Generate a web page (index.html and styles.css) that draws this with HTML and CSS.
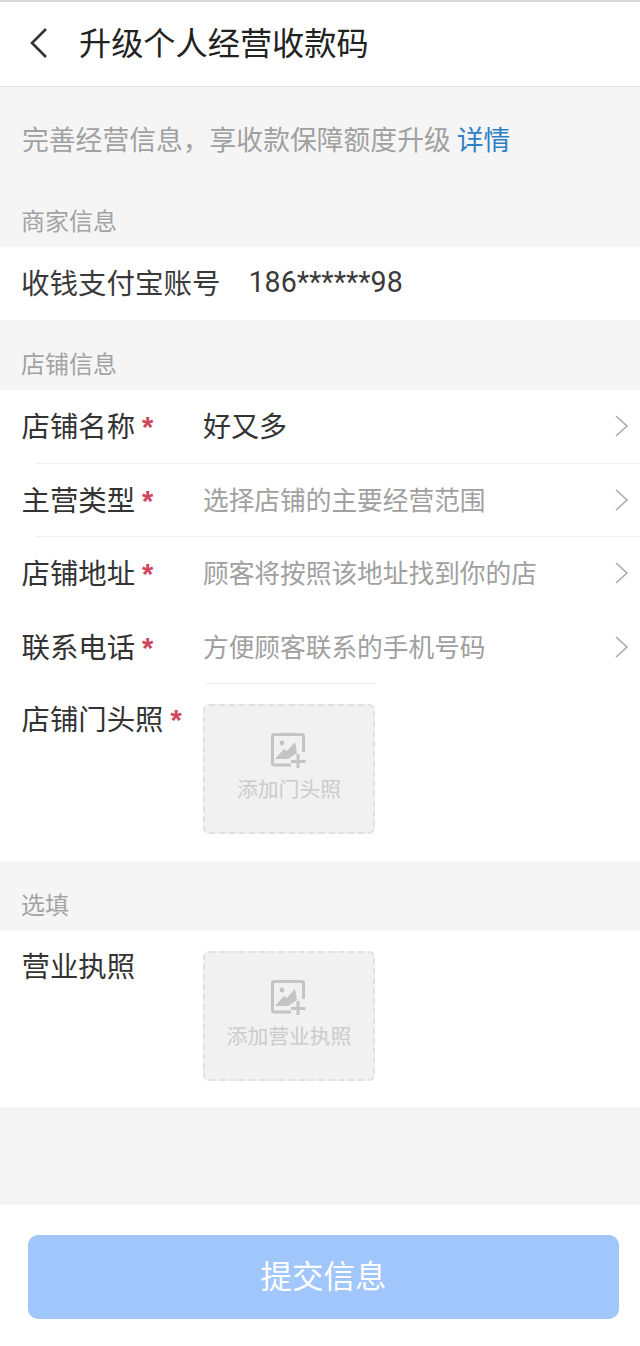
FILE: index.html
```html
<!DOCTYPE html>
<html lang="zh-CN">
    <head>
        <meta charset="UTF-8">
        <meta name="viewport" content="width=device-width, initial-scale=1.0">
        <title>升级个人经营收款码</title>
        <link rel="stylesheet" href="styles.css">
    </head>
    <body>
        <header class="topbar">
            <svg class="back" width="20" height="32" viewBox="0 0 20 32"><path d="M17 2 L3 16 L17 30" fill="none" stroke="#333" stroke-width="2.6"/></svg>
            <h1 class="title">升级个人经营收款码</h1>
        </header>

        <p class="notice">完善经营信息，享收款保障额度升级 <a class="link">详情</a></p>

        <h2 class="section first">商家信息</h2>
        <div class="group">
            <div class="account">
                <span>收钱支付宝账号</span>
                <span class="account-no">186******98</span>
            </div>
        </div>

        <h2 class="section">店铺信息</h2>
        <div class="group shop">
            <div class="row line">
                <div class="label">店铺名称<i class="star">*</i></div>
                <div class="value">好又多</div>
                <svg class="arrow" width="14" height="22" viewBox="0 0 14 22"><path d="M1 1 L12 11 L1 21" fill="none" stroke="#aaa" stroke-width="1.6"/></svg>
            </div>
            <div class="row line">
                <div class="label">主营类型<i class="star">*</i></div>
                <div class="value hint">选择店铺的主要经营范围</div>
                <svg class="arrow" width="14" height="22" viewBox="0 0 14 22"><path d="M1 1 L12 11 L1 21" fill="none" stroke="#aaa" stroke-width="1.6"/></svg>
            </div>
            <div class="row">
                <div class="label">店铺地址<i class="star">*</i></div>
                <div class="value hint">顾客将按照该地址找到你的店</div>
                <svg class="arrow" width="14" height="22" viewBox="0 0 14 22"><path d="M1 1 L12 11 L1 21" fill="none" stroke="#aaa" stroke-width="1.6"/></svg>
            </div>
            <div class="row short-line">
                <div class="label">联系电话<i class="star">*</i></div>
                <div class="value hint">方便顾客联系的手机号码</div>
                <svg class="arrow" width="14" height="22" viewBox="0 0 14 22"><path d="M1 1 L12 11 L1 21" fill="none" stroke="#aaa" stroke-width="1.6"/></svg>
            </div>
            <div class="photo-row">
                <div class="label">店铺门头照<i class="star">*</i></div>
                <div class="upload">
                    <svg class="pic" width="36" height="36" viewBox="0 0 36 36">
                        <path d="M20 32 H3 Q1.5 32 1.5 30.5 V3 Q1.5 1.5 3 1.5 H31 Q32.500 1.500 32.500 3 V19" fill="none" stroke="#c4c4c4" stroke-width="3"/>
                        <circle cx="11" cy="10" r="2.4" fill="#c4c4c4"/>
                        <path d="M4 26 L13 16 L16 18 L24 9 L26 20 L17 26 Z" fill="#c4c4c4"/>
                        <path d="M27 21 V35 M20 28.500 H34.500" fill="none" stroke="#c4c4c4" stroke-width="3"/>
                    </svg>
                    <span class="upload-text">添加门头照</span>
                </div>
            </div>
        </div>

        <h2 class="section">选填</h2>
        <div class="group optional">
            <div class="photo-row">
                <div class="label">营业执照</div>
                <div class="upload">
                    <svg class="pic" width="36" height="36" viewBox="0 0 36 36">
                        <path d="M20 32 H3 Q1.5 32 1.5 30.5 V3 Q1.5 1.5 3 1.5 H31 Q32.500 1.500 32.500 3 V19" fill="none" stroke="#c4c4c4" stroke-width="3"/>
                        <circle cx="11" cy="10" r="2.4" fill="#c4c4c4"/>
                        <path d="M4 26 L13 16 L16 18 L24 9 L26 20 L17 26 Z" fill="#c4c4c4"/>
                        <path d="M27 21 V35 M20 28.500 H34.500" fill="none" stroke="#c4c4c4" stroke-width="3"/>
                    </svg>
                    <span class="upload-text">添加营业执照</span>
                </div>
            </div>
        </div>

        <div class="spacer"></div>

        <footer class="footer">
            <button class="submit">提交信息</button>
        </footer>
    </body>
</html>
```

FILE: styles.css
```css
* {
    box-sizing: border-box;
}
html, body {
    margin: 0;
    padding: 0;
}
body {
    width: 640px;
    height: 1346px;
    overflow: hidden;
    background: #f5f5f6;
    color: #333;
    font-family: "Noto Sans CJK SC", "Liberation Sans", sans-serif;
}

.topbar {
    height: 87px;
    background: white;
    border-top: 2px solid #d8d8d8;
    border-bottom: 1px solid #e2e2e4;
    display: flex;
    align-items: center;
    padding: 0 0 3px 29px;
}
.back {
    flex: none;
}
.title {
    margin: -4px 0 0 30px;
    font-size: 32.2px;
    font-weight: 400;
    line-height: 44px;
    color: #222;
    letter-spacing: 0;
}

.notice {
    margin: 0;
    height: 108px;
    padding: 32px 0 0 22px;
    font-size: 26.8px;
    line-height: 40px;
    color: #a0a0a0;
}
.link {
    color: #2f7fc4;
}

.section {
    margin: 0;
    height: 70px;
    padding: 28px 0 0 21px;
    font-size: 24px;
    font-weight: 400;
    line-height: 30px;
    color: #a3a3a3;
}
.section.first {
    height: 52px;
    padding-top: 10px;
}

.group {
    background: white;
}
.account {
    height: 73px;
    display: flex;
    align-items: center;
    padding: 0 0 4px 21px;
    font-size: 28.5px;
    color: #3a3a3a;
}
.account-no {
    margin-left: 28px;
    font-size: 28.6px;
    font-family: Roboto, "Liberation Sans", sans-serif;
}

.shop {
    height: 471px;
}
.optional {
    height: 176px;
}

.row {
    height: 73.5px;
    display: flex;
    align-items: center;
    padding: 0 11px 3px 21.5px;
    position: relative;
}
.line::after {
    content: "";
    position: absolute;
    left: 36px;
    right: 0;
    bottom: 0;
    border-bottom: 1px solid #f0f0f0;
}
.short-line::after {
    content: "";
    position: absolute;
    left: 205px;
    width: 170px;
    bottom: 0;
    border-bottom: 1px solid #f0f0f0;
}
.label {
    width: 181.5px;
    flex: none;
    font-size: 28.4px;
    line-height: 40px;
    color: #333;
}
.star {
    margin-left: 7px;
    font-style: normal;
    font-weight: 700;
    font-size: 29px;
    line-height: 20px;
    color: #d0455c;
    font-family: "Liberation Sans", sans-serif;
}
.value {
    flex: 1;
    font-size: 28px;
    line-height: 40px;
    color: #333;
}
.hint {
    font-size: 25.7px;
    color: #a0a0a0;
}
.arrow {
    flex: none;
    margin-top: 2px;
}

.photo-row {
    display: flex;
    padding: 14px 0 0 21.5px;
}
.upload {
    width: 172px;
    height: 130px;
    margin-top: 6px;
    background: #f1f1f1;
    border: 2px dashed #e0e0e0;
    border-radius: 6px;
    display: flex;
    flex-direction: column;
    align-items: center;
    padding-top: 27px;
}
.pic {
    flex: none;
}
.upload-text {
    margin-top: 4px;
    font-size: 20.8px;
    line-height: 30px;
    color: #cbcbcb;
}

.spacer {
    height: 98px;
}

.footer {
    height: 141px;
    background: white;
    padding: 30px 21px 0 28px;
}
.submit {
    display: block;
    width: 591px;
    height: 84px;
    padding: 0 0 6px;
    border: none;
    border-radius: 10px;
    background: #a0c6fb;
    color: white;
    font-family: inherit;
    font-size: 31.5px;
}
```
